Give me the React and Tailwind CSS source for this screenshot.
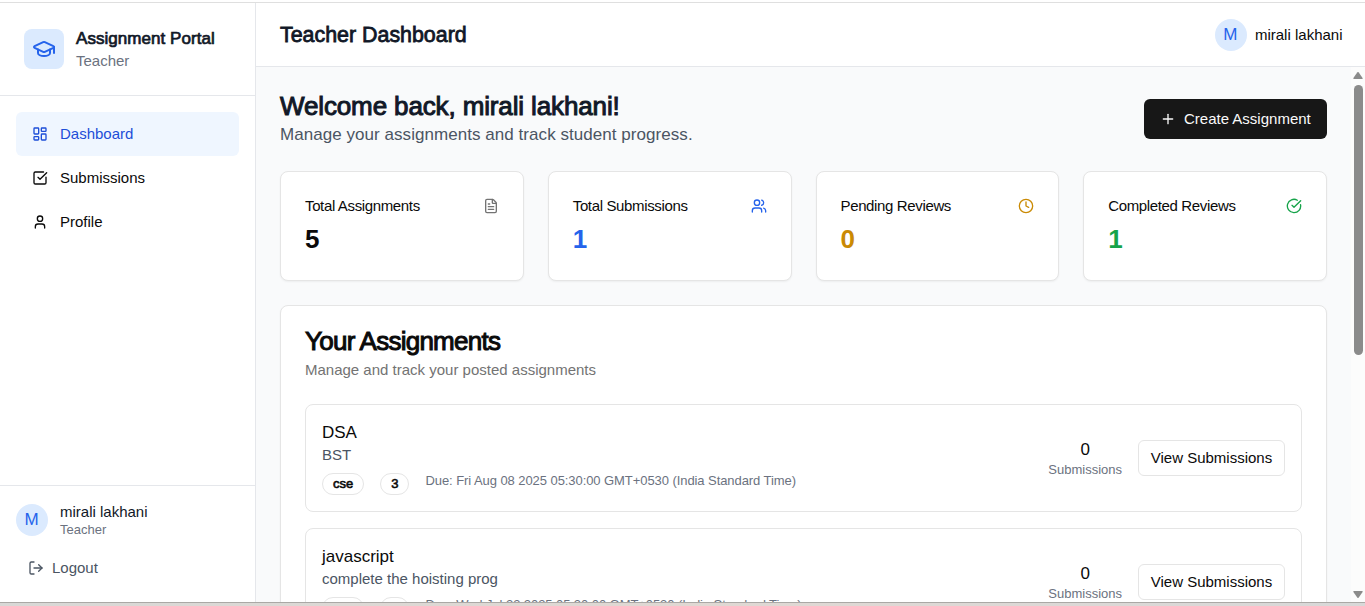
import React from "react";
import {
  GraduationCap,
  LayoutDashboard,
  SquareCheckBig,
  User,
  LogOut,
  Plus,
  FileText,
  Users,
  Clock,
  CircleCheckBig,
} from "lucide-react";

const navItems = [
  { label: "Dashboard", Icon: LayoutDashboard, style: "bg-[#eff6ff] text-[#1d4ed8]" },
  { label: "Submissions", Icon: SquareCheckBig, style: "text-[#0a0a0a]" },
  { label: "Profile", Icon: User, style: "text-[#0a0a0a]" },
];

const stats = [
  { label: "Total Assignments", value: "5", Icon: FileText, valueStyle: "text-[#0a0a0a]", iconStyle: "text-[#737373]" },
  { label: "Total Submissions", value: "1", Icon: Users, valueStyle: "text-[#2563eb]", iconStyle: "text-[#2563eb]" },
  { label: "Pending Reviews", value: "0", Icon: Clock, valueStyle: "text-[#ca8a04]", iconStyle: "text-[#ca8a04]" },
  { label: "Completed Reviews", value: "1", Icon: CircleCheckBig, valueStyle: "text-[#16a34a]", iconStyle: "text-[#16a34a]" },
];

const assignments = [
  { title: "DSA", detail: "BST", tags: ["cse", "3"], due: "Due: Fri Aug 08 2025 05:30:00 GMT+0530 (India Standard Time)", count: 0 },
  { title: "javascript", detail: "complete the hoisting prog", tags: ["cse", "3"], due: "Due: Wed Jul 23 2025 05:30:00 GMT+0530 (India Standard Time)", count: 0 },
];

function Avatar() {
  return (
    <div className="flex size-8 shrink-0 items-center justify-center rounded-full bg-[#dbeafe] pr-px text-[17px] leading-6 text-[#2563eb]">
      M
    </div>
  );
}

function Sidebar() {
  return (
    <aside className="flex w-64 shrink-0 flex-col border-r border-[#e5e7eb] bg-white">
      <div className="flex h-[93px] shrink-0 items-center gap-3 border-b border-[#e5e7eb] px-6">
        <div className="flex size-10 items-center justify-center rounded-lg bg-[#dbeafe]">
          <GraduationCap className="size-6 text-[#2563eb]" />
        </div>
        <div>
          <h1 className="text-[17px] leading-6 tracking-[0.05px] text-[#111827] [-webkit-text-stroke:0.7px]">Assignment Portal</h1>
          <p className="text-[15px] leading-5 text-[#6b7280]">Teacher</p>
        </div>
      </div>
      <nav className="flex-1 p-4">
        {navItems.map(({ label, Icon, style }) => (
          <div key={label} className={`flex h-11 items-center gap-3 rounded-md px-4 text-[15px] ${style}`}>
            <Icon className="size-4" />
            <span>{label}</span>
          </div>
        ))}
      </nav>
      <div className="h-[117px] shrink-0 border-t border-[#e5e7eb] px-4 pt-4">
        <div className="flex items-start gap-3">
          <div className="pt-0.5">
            <Avatar />
          </div>
          <div>
            <p className="text-[15px] leading-5 text-[#111827]">mirali lakhani</p>
            <p className="text-[13px] leading-4 text-[#6b7280]">Teacher</p>
          </div>
        </div>
        <div className="mt-3 flex h-9 items-center gap-2 px-3 text-[15px] text-[#4b5563]">
          <LogOut className="size-4" />
          <span>Logout</span>
        </div>
      </div>
    </aside>
  );
}

function StatCard({ label, value, Icon, valueStyle, iconStyle }) {
  return (
    <div className="h-[110px] rounded-lg border border-[#e5e5e5] bg-white p-6 shadow-xs">
      <div className="flex items-center justify-between">
        <h3 className="text-[15px] leading-5 tracking-[-0.36px] text-[#0a0a0a]">{label}</h3>
        <Icon className={`size-4 ${iconStyle}`} />
      </div>
      <div className={`mt-[7px] text-[26px] leading-8 font-bold ${valueStyle}`}>{value}</div>
    </div>
  );
}

function AssignmentRow({ title, detail, tags, due, count }) {
  return (
    <div className="flex h-[108px] items-center justify-between rounded-lg border border-[#e5e5e5] px-4">
      <div>
        <h3 className="text-[17px] leading-6 text-[#0a0a0a]">{title}</h3>
        <p className="text-[15px] leading-5 text-[#4b5563]">{detail}</p>
        <div className="mt-2 flex items-start gap-4">
          {tags.map((tag) => (
            <span key={tag} className="flex h-[22px] items-center rounded-full border border-[#e5e5e5] px-2.5 text-[13px] leading-4 text-[#0a0a0a] [-webkit-text-stroke:0.6px]">
              {tag}
            </span>
          ))}
          <span className="text-[13px] leading-4 tracking-[-0.07px] text-[#6b7280]">{due}</span>
        </div>
      </div>
      <div className="flex items-center gap-4">
        <div className="pt-1 text-center">
          <p className="text-[17px] leading-5 text-[#0a0a0a]">{count}</p>
          <p className="text-[13px] leading-5 text-[#6b7280]">Submissions</p>
        </div>
        <button className="flex h-9 w-[147px] items-center justify-center rounded-md border border-[#e5e5e5] bg-white text-[15px] text-[#0a0a0a]">
          View Submissions
        </button>
      </div>
    </div>
  );
}

function Scrollbar() {
  return (
    <div className="flex w-3.5 shrink-0 flex-col items-center bg-[#fcfcfc] pt-[5px] pb-1 text-[#8b8b8b]">
      <svg width="10" height="7" viewBox="0 0 10 7" fill="currentColor">
        <path d="M4.2.5a1 1 0 0 1 1.6 0L9.6 6a.7.7 0 0 1-.6 1H1a.7.7 0 0 1-.6-1Z" />
      </svg>
      <div className="mt-1.5 h-[270px] w-[9px] rounded-full bg-[#8b8b8b]" />
      <svg className="mt-auto" width="10" height="7" viewBox="0 0 10 7" fill="currentColor">
        <path d="M4.2 6.5a1 1 0 0 0 1.6 0L9.6 1A.7.7 0 0 0 9 0H1a.7.7 0 0 0-.6 1Z" />
      </svg>
    </div>
  );
}

export default function App() {
  return (
    <div className="flex h-[606px] w-[1365px] flex-col overflow-hidden bg-white font-['Liberation_Sans',Arial,sans-serif]">
      <div className="h-[3px] shrink-0 border-b border-[#dfdfdf]" />
      <div className="flex min-h-0 flex-1">
        <Sidebar />
        <div className="flex min-w-0 flex-1 flex-col">
          <header className="flex h-16 shrink-0 items-center justify-between border-b border-[#e5e7eb] bg-white pr-[22.5px] pl-6">
            <h2 className="text-[21.4px] leading-7 text-[#111827] [-webkit-text-stroke:0.8px]">Teacher Dashboard</h2>
            <div className="flex items-center gap-2">
              <Avatar />
              <span className="pt-px text-[15px] leading-5 text-[#0a0a0a]">mirali lakhani</span>
            </div>
          </header>
          <div className="flex min-h-0 flex-1 bg-[#f9fafb]">
            <main className="min-w-0 flex-1 overflow-hidden p-6">
              <div className="flex items-center justify-between">
                <div>
                  <h1 className="pb-px text-[26px] leading-[31px] tracking-[-0.13px] text-[#111827] [-webkit-text-stroke:1px]">Welcome back, mirali lakhani!</h1>
                  <p className="text-[17px] leading-6 tracking-[0.05px] text-[#4b5563]">Manage your assignments and track student progress.</p>
                </div>
                <button className="flex h-10 w-[183px] items-center gap-2 rounded-md bg-[#171717] pl-4 text-[15px] text-[#fafafa]">
                  <Plus className="size-4" />
                  Create Assignment
                </button>
              </div>
              <div className="mt-6 grid grid-cols-4 gap-6">
                {stats.map((stat) => (
                  <StatCard key={stat.label} {...stat} />
                ))}
              </div>
              <section className="mt-6 rounded-lg border border-[#e5e5e5] bg-white p-6 shadow-xs">
                <h2 className="text-[26px] leading-[22px] tracking-[-0.75px] text-[#0a0a0a] [-webkit-text-stroke:1px]">Your Assignments</h2>
                <p className="mt-2 text-[15px] leading-5 text-[#737373]">Manage and track your posted assignments</p>
                <div className="mt-6 flex flex-col gap-4">
                  {assignments.map((item) => (
                    <AssignmentRow key={item.title} {...item} />
                  ))}
                </div>
              </section>
            </main>
            <Scrollbar />
          </div>
        </div>
      </div>
      <div className="h-1 shrink-0 border-t border-[#aaa8a5] bg-linear-to-r from-[#d8d8d6] via-[#e0d8d3] to-[#d8d8d8]" />
    </div>
  );
}
